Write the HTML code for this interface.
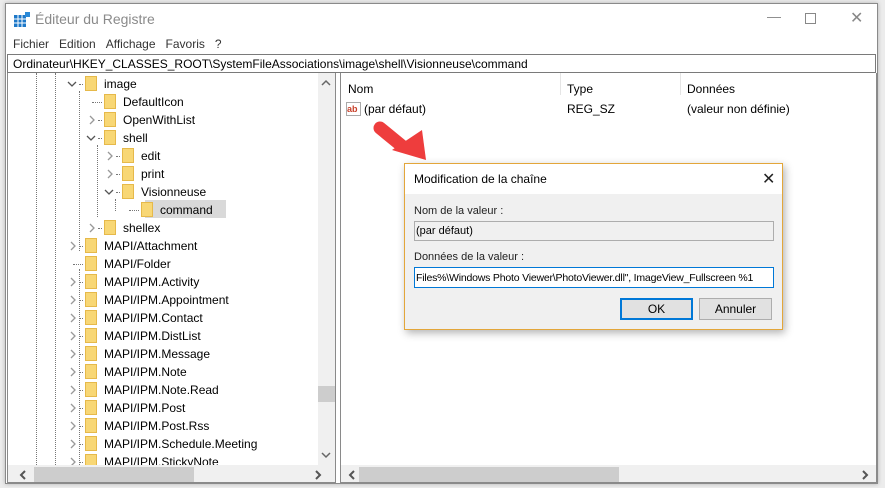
<!DOCTYPE html>
<html><head><meta charset="utf-8"><style>
*{margin:0;padding:0;box-sizing:border-box}
body{width:885px;height:488px;background:#ececec;font-family:"Liberation Sans",sans-serif;font-size:12px;color:#000;position:relative;overflow:hidden}
.win{position:absolute;left:5px;top:3px;width:873px;height:481px;background:#fff;border:1px solid #8a8a8a;box-shadow:0 0 4px rgba(0,0,0,.25)}
.a{position:absolute;white-space:nowrap}
.fold{position:absolute;width:12px;height:15px;background:#f8d775;border:1px solid #e6b94a}
.chev{position:absolute}
.dotv{position:absolute;border-left:1px dotted #777;width:0}
.doth{position:absolute;border-top:1px dotted #777;height:0}
</style></head><body>
<div class="win">
 <svg class="a" style="left:8px;top:8px" width="16" height="16"><rect x="0" y="3" width="12" height="12" fill="#1e78c8"/><path d="M4 3v12M8 3v12M0 7h12M0 11h12" stroke="#fff" stroke-width="1"/><rect x="11" y="0" width="5" height="5" fill="#2a8ad8"/></svg>
 <div class="a" style="left:29px;top:7px;font-size:14px;color:#8a8a8a">Éditeur du Registre</div>
 <div class="a" style="left:761px;top:4px;color:#888;font-size:14px">—</div>
 <div class="a" style="left:799px;top:9px;width:11px;height:11px;border:1px solid #888"></div>
 <div class="a" style="left:844px;top:4px;color:#888;font-size:16px">✕</div>
 <div class="a" style="left:7px;top:33px;color:#333">Fichier &nbsp; Edition &nbsp;&nbsp;Affichage &nbsp; Favoris &nbsp; ?</div>
 <div class="a" style="left:1px;top:50px;width:869px;height:19px;border:1px solid #7a7a7a;padding:2px 5px">Ordinateur\HKEY_CLASSES_ROOT\SystemFileAssociations\image\shell\Visionneuse\command</div>
 <div class="a" style="left:1px;top:69px;width:329px;height:410px;border:1px solid #8a8a8a;border-top:none;overflow:hidden;background:#fff">
  <div class="dotv" style="left:28px;top:0;height:392px"></div>
  <div class="dotv" style="left:47px;top:0;height:392px"></div>
  <div class="dotv" style="left:71px;top:18px;height:160px"></div>
  <div class="dotv" style="left:89px;top:72px;height:72px"></div>
  <div class="dotv" style="left:107px;top:126px;height:12px"></div>
  <div class="dotv" style="left:71px;top:196px;height:200px"></div>
  <div id="tree"></div>
  <div class="a" style="left:310px;top:0;width:17px;height:392px;background:#f0f0f0"></div>
  <svg class="a" style="left:313px;top:6px" width="10" height="8"><path d="M1 6 L5 2 L9 6" stroke="#666" stroke-width="1.5" fill="none"/></svg>
  <div class="a" style="left:310px;top:313px;width:17px;height:16px;background:#cdcdcd"></div>
  <svg class="a" style="left:313px;top:378px" width="10" height="8"><path d="M1 2 L5 6 L9 2" stroke="#666" stroke-width="1.5" fill="none"/></svg>
  <div class="a" style="left:0;top:392px;width:327px;height:17px;background:#f0f0f0"></div>
  <div class="a" style="left:26px;top:394px;width:160px;height:15px;background:#cdcdcd"></div>
  <svg class="a" style="left:11px;top:397px" width="8" height="10"><path d="M6 1 L2 5 L6 9" stroke="#555" stroke-width="2" fill="none"/></svg>
  <svg class="a" style="left:306px;top:397px" width="8" height="10"><path d="M2 1 L6 5 L2 9" stroke="#555" stroke-width="2" fill="none"/></svg>
 </div>
 <div class="a" style="left:334px;top:69px;width:537px;height:410px;border:1px solid #8a8a8a;border-top:none;background:#fff">
  <div class="a" style="left:7px;top:9px">Nom</div>
  <div class="a" style="left:219px;top:0;height:22px;border-left:1px solid #e5e5e5"></div>
  <div class="a" style="left:226px;top:9px">Type</div>
  <div class="a" style="left:339px;top:0;height:22px;border-left:1px solid #e5e5e5"></div>
  <div class="a" style="left:346px;top:9px">Données</div>
  <div class="a" style="left:5px;top:29px;width:15px;height:14px;border:1px solid #aaa;font-size:9px;color:#c8402a;font-weight:bold;line-height:12px">ab</div>
  <div class="a" style="left:23px;top:29px">(par défaut)</div>
  <div class="a" style="left:226px;top:29px">REG_SZ</div>
  <div class="a" style="left:346px;top:29px">(valeur non définie)</div>
  <div class="a" style="left:0;top:392px;width:535px;height:17px;background:#f0f0f0"></div>
  <div class="a" style="left:18px;top:394px;width:260px;height:15px;background:#cdcdcd"></div>
  <svg class="a" style="left:7px;top:397px" width="8" height="10"><path d="M6 1 L2 5 L6 9" stroke="#555" stroke-width="2" fill="none"/></svg>
  <svg class="a" style="left:520px;top:397px" width="8" height="10"><path d="M2 1 L6 5 L2 9" stroke="#555" stroke-width="2" fill="none"/></svg>
 </div>
</div>
<svg class="a" style="left:360px;top:110px" width="80" height="60"><path d="M20 18 L42 36" stroke="#ee3d3d" stroke-width="13" stroke-linecap="round"/><polygon points="32,40 62,20 66,50" fill="#ee3d3d"/></svg>
<div class="a" style="left:404px;top:163px;width:379px;height:167px;background:#f0f0f0;border:1px solid #e3a63a;box-shadow:2px 3px 8px rgba(0,0,0,.3)">
 <div class="a" style="left:0;top:0;width:377px;height:30px;background:#fff"></div>
 <div class="a" style="left:9px;top:8px">Modification de la chaîne</div>
 <div class="a" style="left:357px;top:5px;font-size:16px;color:#222">✕</div>
 <div class="a" style="left:9px;top:41px;font-size:11px;color:#222">Nom de la valeur :</div>
 <div class="a" style="left:9px;top:57px;width:360px;height:20px;border:1px solid #adadad;background:#f0f0f0;padding:3px 1px;font-size:11px">(par défaut)</div>
 <div class="a" style="left:9px;top:87px;font-size:11px;color:#222">Données de la valeur :</div>
 <div class="a" style="left:9px;top:103px;width:360px;height:21px;border:1px solid #0078d7;background:#fff;padding:4px 1px;font-size:10.5px;overflow:hidden;letter-spacing:-0.2px">Files%\Windows Photo Viewer\PhotoViewer.dll", ImageView_Fullscreen %1</div>
 <div class="a" style="left:215px;top:134px;width:73px;height:22px;border:2px solid #0078d7;background:#e1e1e1;text-align:center;line-height:18px">OK</div>
 <div class="a" style="left:294px;top:134px;width:73px;height:22px;border:1px solid #adadad;background:#e1e1e1;text-align:center;line-height:20px">Annuler</div>
</div>
<script>
var rows=[[75,"image","v"],[94,"DefaultIcon",""],[94,"OpenWithList",">"],[94,"shell","v"],[112,"edit",">"],[112,"print",">"],[112,"Visionneuse","v"],[131,"command","",1],[94,"shellex",">"],[75,"MAPI/Attachment",">"],[75,"MAPI/Folder",""],[75,"MAPI/IPM.Activity",">"],[75,"MAPI/IPM.Appointment",">"],[75,"MAPI/IPM.Contact",">"],[75,"MAPI/IPM.DistList",">"],[75,"MAPI/IPM.Message",">"],[75,"MAPI/IPM.Note",">"],[75,"MAPI/IPM.Note.Read",">"],[75,"MAPI/IPM.Post",">"],[75,"MAPI/IPM.Post.Rss",">"],[75,"MAPI/IPM.Schedule.Meeting",">"],[75,"MAPI/IPM.StickyNote",">"]];
var h="";rows.forEach(function(r,i){var y=3+i*18,x=r[0]-6;
if(r[3])h+='<div class="a" style="left:'+(x+12)+'px;top:'+(y-2)+'px;width:81px;height:18px;background:#d9d9d9"></div>';
if(r[2]==">")h+='<svg class="chev" style="left:'+(x-8)+'px;top:'+(y+3)+'px" width="8" height="10"><path d="M2 1 L6 5 L2 9" stroke="#999" stroke-width="1.3" fill="none"/></svg>';
if(r[2]=="v")h+='<svg class="chev" style="left:'+(x-10)+'px;top:'+(y+4)+'px" width="10" height="8"><path d="M1 2 L5 6 L9 2" stroke="#555" stroke-width="1.3" fill="none"/></svg>';
h+='<div class="doth" style="left:'+(x+(r[2]?2:-4))+'px;top:'+(y+8)+'px;width:'+(r[2]?4:10)+'px"></div>';
h+='<div class="fold" style="left:'+(x+8)+'px;top:'+(y)+'px"></div>';
h+='<div class="a" style="left:'+(x+27)+'px;top:'+(y+1)+'px">'+r[1]+'</div>';});
document.getElementById("tree").innerHTML=h;
</script>
</body></html>
